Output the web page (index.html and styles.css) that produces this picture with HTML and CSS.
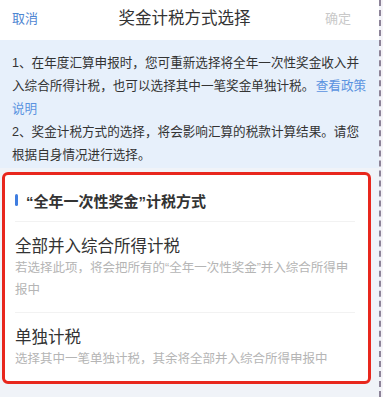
FILE: index.html
```html
<!DOCTYPE html>
<html lang="zh-CN">
<head>
    <meta charset="UTF-8">
    <meta name="viewport" content="width=device-width, initial-scale=1.0">
    <title>奖金计税方式选择</title>
    <link rel="stylesheet" href="styles.css">
</head>
<body>
    <div class="frame">
        <!-- top bar -->
        <div class="navbar">
            <span class="nav-btn cancel">取消</span>
            <span class="nav-title">奖金计税方式选择</span>
            <span class="nav-btn confirm">确定</span>
        </div>

        <!-- notice -->
        <div class="notice">
            <p>1、在年度汇算申报时，您可重新选择将全年一次性奖金收入并入综合所得计税，也可以选择其中一笔奖金单独计税。 <a class="link">查看政策说明</a></p>
            <p>2、奖金计税方式的选择，将会影响汇算的税款计算结果。请您根据自身情况进行选择。</p>
        </div>

        <!-- options -->
        <div class="card">
            <div class="card-head">“全年一次性奖金”计税方式</div>
            <div class="option">
                <div class="option-title">全部并入综合所得计税</div>
                <div class="option-desc">若选择此项，将会把所有的“全年一次性奖金”并入综合所得申报中</div>
            </div>
            <div class="option">
                <div class="option-title">单独计税</div>
                <div class="option-desc">选择其中一笔单独计税，其余将全部并入综合所得申报中</div>
            </div>
        </div>
    </div>
</body>
</html>
```

FILE: styles.css
```css
body {
    margin: 0;
    padding: 0;
    background-color: #f5f3f8;
    font-family: "Liberation Sans", "Noto Sans CJK SC", sans-serif;
    color: #333;
}
.frame {
    width: 379px;
    height: 397px;
    overflow: hidden;
    background-color: #f0f3f8;
    border-right: 2px dashed #8d8398;
}
.navbar {
    display: flex;
    align-items: center;
    justify-content: space-between;
    height: 34px;
    padding: 0 28px 6px 12px;
    background: white;
}
.nav-btn {
    font-size: 13px;
}
.cancel {
    color: #4f86d2;
}
.confirm {
    color: #c9c9c9;
}
.nav-title {
    font-size: 16.5px;
    color: #333;
    margin-left: 6px;
}
.notice {
    background-color: #e7f0fb;
    padding: 12px 11px 1px 12px;
    font-size: 12.6px;
    line-height: 23px;
    word-spacing: -2px;
}
.notice p {
    margin: 0;
}
.link {
    color: #5a93e0;
}
.card {
    margin: 4px 8px 0 2px;
    background: white;
    border: 3px solid #e8271d;
    border-radius: 6px;
    padding: 0 13px 7px 10px;
}
.card-head {
    display: flex;
    align-items: center;
    height: 42px;
    padding-top: 4px;
    font-size: 15px;
    font-weight: bold;
    border-bottom: 1px solid #f2f2f2;
}
.card-head::before {
    content: "";
    width: 3px;
    height: 12px;
    border-radius: 2px;
    background-color: #3f7de0;
    margin-right: 8px;
}
.option {
    padding: 13px 0 11px;
    border-bottom: 1px solid #f2f2f2;
}
.option:last-child {
    border-bottom: none;
    padding-bottom: 4px;
}
.option-title {
    font-size: 16.5px;
    line-height: 22px;
    color: #333;
}
.option-desc {
    font-size: 12.5px;
    line-height: 22px;
    color: #b5b5b5;
}
```
